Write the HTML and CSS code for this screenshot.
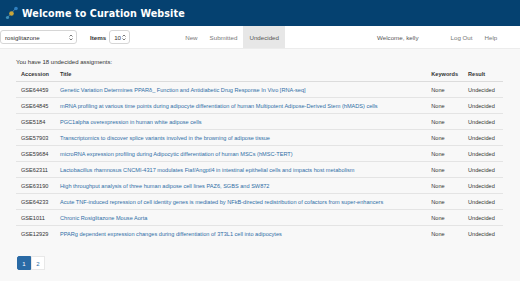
FILE: index.html
```html
<!DOCTYPE html>
<html lang="en">
<head>
    <meta charset="UTF-8">
    <title>Curation Website</title>
    <link rel="stylesheet" href="styles.css">
</head>
<body>
    <div class="site-header">
        <svg class="logo" width="14" height="16" viewBox="0 0 14 16">
            <line x1="2" y1="13" x2="11" y2="3" stroke="#5b8fb0" stroke-width="0.8"/>
            <circle cx="2.5" cy="12.5" r="1.6" fill="#3d8fb8"/>
            <circle cx="6.5" cy="8.5" r="2.3" fill="#c9a63a"/>
            <circle cx="11" cy="3.5" r="1.8" fill="#2f7fc0"/>
        </svg>
        <h1>Welcome to Curation Website</h1>
    </div>

    <div class="navbar">
        <div class="fake-select wide">
            <span>rosiglitazone</span>
            <svg width="4" height="7" viewBox="0 0 4 7"><path d="M0.5 2.5 L2 1 L3.5 2.5 M0.5 4.5 L2 6 L3.5 4.5" fill="none" stroke="#555" stroke-width="0.8"/></svg>
        </div>
        <span class="items-label">Items</span>
        <div class="fake-select narrow">
            <span>10</span>
            <svg width="4" height="7" viewBox="0 0 4 7"><path d="M0.5 2.5 L2 1 L3.5 2.5 M0.5 4.5 L2 6 L3.5 4.5" fill="none" stroke="#555" stroke-width="0.8"/></svg>
        </div>
        <ul class="nav-links">
            <li><a href="#">New</a></li>
            <li><a href="#">Submitted</a></li>
            <li class="active"><a href="#">Undecided</a></li>
        </ul>
        <span class="welcome">Welcome, kelly</span>
        <ul class="nav-right">
            <li><a href="#">Log Out</a></li>
            <li><a href="#">Help</a></li>
        </ul>
    </div>

    <div class="content">
        <p class="summary">You have 18 undecided assigments:</p>
        <table class="assignments">
            <thead>
                <tr>
                    <th class="col-acc">Accession</th>
                    <th>Title</th>
                    <th class="col-kw">Keywords</th>
                    <th class="col-res">Result</th>
                </tr>
            </thead>
            <tbody>
                <tr><td>GSE64459</td><td><a href="#">Genetic Variation Determines PPARδ_ Function and Antidiabetic Drug Response In Vivo [RNA-seq]</a></td><td>None</td><td>Undecided</td></tr>
                <tr><td>GSE64845</td><td><a href="#">mRNA profiling at various time points during adipocyte differentiation of human Multipotent Adipose-Derived Stem (hMADS) cells</a></td><td>None</td><td>Undecided</td></tr>
                <tr><td>GSE5184</td><td><a href="#">PGC1alpha overexpression in human white adipose cells</a></td><td>None</td><td>Undecided</td></tr>
                <tr><td>GSE57903</td><td><a href="#">Transcriptomics to discover splice variants involved in the browning of adipose tissue</a></td><td>None</td><td>Undecided</td></tr>
                <tr><td>GSE59684</td><td><a href="#">microRNA expression profiling during Adipocytic differentiation of human MSCs (hMSC-TERT)</a></td><td>None</td><td>Undecided</td></tr>
                <tr><td>GSE62311</td><td><a href="#">Lactobacillus rhamnosus CNCMI-4317 modulates Fiaf/Angptl4 in intestinal epithelial cells and impacts host metabolism</a></td><td>None</td><td>Undecided</td></tr>
                <tr><td>GSE63190</td><td><a href="#">High throughput analysis of three human adipose cell lines PAZ6, SGBS and SW872</a></td><td>None</td><td>Undecided</td></tr>
                <tr><td>GSE64233</td><td><a href="#">Acute TNF-induced repression of cell identity genes is mediated by NFkB-directed redistribution of cofactors from super-enhancers</a></td><td>None</td><td>Undecided</td></tr>
                <tr><td>GSE1011</td><td><a href="#">Chronic Rosiglitazone Mouse Aorta</a></td><td>None</td><td>Undecided</td></tr>
                <tr><td>GSE12929</td><td><a href="#">PPARg dependent expression changes during differentiation of 3T3L1 cell into adipocytes</a></td><td>None</td><td>Undecided</td></tr>
            </tbody>
        </table>

        <ul class="pagination">
            <li class="active"><a href="#">1</a></li>
            <li><a href="#">2</a></li>
        </ul>
    </div>
</body>
</html>
```

FILE: styles.css
```css
body {
    margin: 0;
    font-family: 'Liberation Sans', Arial, sans-serif;
    color: #333;
    background-color: #f8f8f8;
}

.site-header {
    background-color: #054170;
    height: 26px;
    display: flex;
    align-items: center;
    padding-left: 5px;
}
.logo {
    margin-right: 3px;
}
.site-header h1 {
    margin: 0;
    color: #ffffff;
    font-family: 'DejaVu Sans', sans-serif;
    font-weight: bold;
    font-size: 9.6px;
    letter-spacing: 0.1px;
}

.navbar {
    background: #ffffff;
    height: 22px;
    display: flex;
    align-items: center;
    border-bottom: 1px solid #ececec;
    font-size: 6.2px;
}
.fake-select {
    height: 14px;
    box-sizing: border-box;
    border: 1px solid #d6d6d6;
    border-radius: 3px;
    background: #fff;
    display: flex;
    align-items: center;
    justify-content: space-between;
    padding: 0 3px 0 4px;
}
.fake-select.wide {
    width: 77px;
}
.fake-select.narrow {
    width: 21px;
}
.items-label {
    font-weight: bold;
    margin: 0 3px 0 13px;
}
.nav-links, .nav-right {
    list-style: none;
    margin: 0;
    padding: 0;
    display: flex;
    height: 100%;
}
.nav-links {
    margin-left: 49px;
}
.nav-links li, .nav-right li {
    display: flex;
    align-items: center;
}
.nav-links a, .nav-right a {
    color: #777;
    text-decoration: none;
    padding: 0 6px;
}
.nav-links li.active {
    background-color: #e7e7e7;
}
.nav-links li.active a {
    color: #555;
}
.welcome {
    margin-left: 92px;
    color: #555;
}
.nav-right {
    margin-left: 26px;
}
.nav-right a {
    padding: 0 6px;
}

.content {
    padding: 0 17px 0 16px;
}
.summary {
    margin: 0;
    padding-top: 10px;
    font-size: 6px;
}
.assignments {
    width: 487px;
    border-collapse: collapse;
    margin-top: 2px;
    font-size: 5.6px;
}
.assignments th {
    text-align: left;
    font-weight: bold;
    padding: 4px 5px;
    border-bottom: 1px solid #dcdcdc;
}
.assignments td {
    padding: 0 5px;
    height: 15px;
    border-bottom: 1px solid #e4e4e4;
    white-space: nowrap;
}
.assignments tbody tr:last-child td {
    border-bottom: none;
}
.assignments a {
    color: #2f6ea6;
    text-decoration: none;
}
.col-acc {
    width: 29px;
}
.col-kw {
    width: 26px;
}
.col-res {
    width: 30px;
}

.pagination {
    list-style: none;
    display: flex;
    margin: 15px 0 0 1px;
    padding: 0;
    font-size: 6px;
}
.pagination a {
    display: block;
    width: 14px;
    height: 14px;
    line-height: 14px;
    text-align: center;
    text-decoration: none;
    color: #2f6ea6;
    background: #fff;
    border: 1px solid #e8e8e8;
    box-sizing: border-box;
}
.pagination li:first-child a {
    border-radius: 2px 0 0 2px;
}
.pagination li.active a {
    background: #2a6aa5;
    border-color: #2a6aa5;
    color: #fff;
}
```
